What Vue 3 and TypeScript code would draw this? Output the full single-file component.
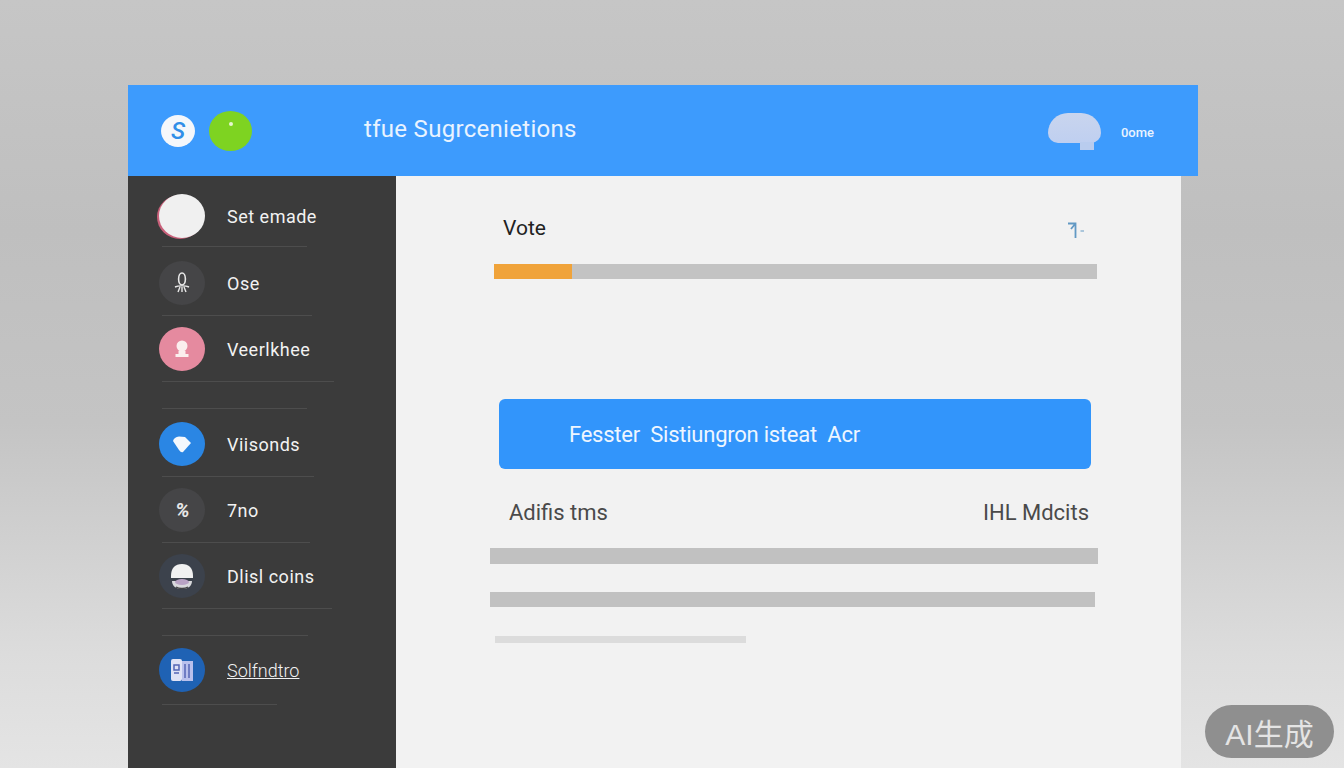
<template>
  <div class="page">
    <div class="window">
      <header class="topbar">
        <div class="brand">
          <div class="logo"><span>S</span></div>
          <div class="status-dot"><i></i></div>
        </div>
        <div class="title">tfue Sugrcenietions</div>
        <div class="account">
          <div class="cloud"><i></i></div>
          <span>0ome</span>
        </div>
      </header>

      <div class="content">
        <!-- Sidebar -->
        <aside class="sidebar">
          <div
            v-for="item in navItems"
            :key="item.label"
            class="nav-item"
            :class="{ spaced: item.topRule }"
          >
            <div v-if="item.topRule" class="nav-rule" :style="{ width: item.topRule + 'px' }"></div>
            <div class="nav-row" :style="{ height: item.height + 'px', paddingTop: item.pad + 'px' }">
              <div class="nav-icon" :class="item.tone">
                <svg v-if="item.tone === 'mic'" viewBox="0 0 20 24" width="20" height="24">
                  <ellipse cx="10" cy="8" rx="3.4" ry="6" fill="none" stroke="#e8e8e8" stroke-width="1.6" />
                  <path d="M3 16c3-1.500 11-1.500 14 0M6 21l2-5M10 21v-5M14 21l-2-5" fill="none" stroke="#e8e8e8" stroke-width="1.4" />
                </svg>
                <svg v-else-if="item.tone === 'rose'" viewBox="0 0 24 24" width="24" height="24">
                  <circle cx="12" cy="9" r="5.500" fill="#fbeeee" />
                  <path d="M8.500 14h7v3h3v3h-13v-3h3z" fill="#fbeeee" />
                </svg>
                <svg v-else-if="item.tone === 'gem'" viewBox="0 0 24 24" width="24" height="24">
                  <path d="M3 9Q4 5 9 4.500L15 5L21 11L13 20Q11 21 9 18z" fill="#f4f8fd" />
                </svg>
                <span v-else-if="item.tone === 'pct'" class="glyph">%</span>
                <svg v-else-if="item.tone === 'helmet'" viewBox="0 0 26 28" width="26" height="28">
                  <path d="M3 19h20c0 5-4 8-10 8S3 24 3 19z" fill="#d9d9dc" />
                  <path d="M2 14C2 6 6 2 13 2s11 4 11 12v2H2z" fill="#f1f1f1" />
                  <ellipse cx="13" cy="20" rx="7" ry="3" fill="#b9a3c4" />
                  <path d="M7 25c3 2 9 2 12 0" fill="none" stroke="#444" stroke-width="1.500" />
                </svg>
                <svg v-else-if="item.tone === 'book'" viewBox="0 0 26 28" width="26" height="28">
                  <rect x="2" y="3" width="11" height="22" rx="2" fill="#dfe2f6" />
                  <rect x="13" y="5" width="11" height="20" fill="#b9c0ec" />
                  <path d="M5 9h5v5H5zM5 17h5M16 8v14M20 8v14" fill="none" stroke="#5566b5" stroke-width="1.500" />
                </svg>
              </div>
              <span class="nav-label" :class="{ thin: item.tone === 'book' }">{{ item.label }}</span>
            </div>
            <div class="nav-rule" :style="{ width: item.rule + 'px' }"></div>
          </div>
        </aside>

        <!-- Main panel -->
        <main class="panel">
          <div class="vote-row">
            <span>Vote</span>
            <svg viewBox="0 0 18 18" width="18" height="18">
              <path d="M1 2.500h7.500V17M8.500 2.500 4 8" fill="none" stroke="#6299c4" stroke-width="1.800" />
              <path d="M13.500 10h3.500" stroke="#8db4d2" stroke-width="1.400" />
            </svg>
          </div>
          <div class="progress"><div class="progress-fill" :style="{ width: progress + 'px' }"></div></div>

          <div class="banner">Fesster&nbsp; Sistiungron isteat&nbsp; Acr</div>

          <div class="labels">
            <span>Adifis tms</span>
            <span>IHL Mdcits</span>
          </div>

          <div class="bar bar-one"></div>
          <div class="bar bar-two"></div>
          <div class="bar bar-three"></div>
        </main>
      </div>
    </div>

    <div class="badge">AI生成</div>
  </div>
</template>

<script setup lang="ts">
interface NavItem {
  label: string
  tone: string
  height: number
  pad: number
  rule: number
  topRule?: number
}

const progress = 78

const navItems: NavItem[] = [
  { label: 'Set emade', tone: 'blank', height: 70, pad: 10, rule: 145 },
  { label: 'Ose', tone: 'mic', height: 68, pad: 4, rule: 150 },
  { label: 'Veerlkhee', tone: 'rose', height: 65, pad: 0, rule: 172 },
  { label: 'Viisonds', tone: 'gem', height: 67, pad: 3, rule: 152, topRule: 145 },
  { label: '7no', tone: 'pct', height: 65, pad: 0, rule: 148 },
  { label: 'Dlisl coins', tone: 'helmet', height: 65, pad: 0, rule: 170 },
  { label: 'Solfndtro', tone: 'book', height: 68, pad: 0, rule: 115, topRule: 146 }
]
</script>

<style>
html,
body {
  margin: 0;
  height: 100%;
  overflow: hidden;
}
</style>

<style scoped>
.page {
  position: relative;
  width: 1344px;
  height: 768px;
  overflow: hidden;
  box-sizing: border-box;
  padding: 85px 0 0 128px;
  font-family: Roboto, "Noto Sans", sans-serif;
  background: linear-gradient(180deg, #c6c6c6 0%, #bfbfbf 30%, #c4c4c4 55%, #dcdcdc 85%, #e4e4e4 100%);
}

.window {
  width: 1070px;
}

.topbar {
  height: 91px;
  background: #3d9bfd;
  display: flex;
  align-items: center;
  color: #e9f3ff;
}

.brand {
  width: 236px;
  padding-left: 33px;
  box-sizing: border-box;
  display: flex;
  align-items: center;
  gap: 14px;
}

.logo {
  width: 34px;
  height: 32px;
  border-radius: 50%;
  background: #f4f7fb;
  color: #2f8ee8;
  display: flex;
  align-items: center;
  justify-content: center;
  font-size: 24px;
  font-style: italic;
  font-weight: 500;
}

.status-dot {
  width: 43px;
  height: 40px;
  border-radius: 50%;
  background: #7ed321;
  position: relative;
}

.status-dot i {
  position: absolute;
  left: 20px;
  top: 11px;
  width: 4px;
  height: 4px;
  border-radius: 50%;
  background: #e8f7d0;
}

.title {
  flex: 1;
  font-size: 24px;
  letter-spacing: 0.3px;
  margin-top: -4px;
}

.account {
  display: flex;
  align-items: center;
  gap: 20px;
  padding-right: 44px;
  font-size: 13px;
  font-weight: 500;
}

.account span {
  margin-top: 3px;
}

.cloud {
  width: 53px;
  height: 30px;
  border-radius: 20px 20px 10px 10px;
  background: linear-gradient(180deg, #c9d5ee, #bfcff0);
  position: relative;
  margin-top: -6px;
}

.cloud i {
  position: absolute;
  left: 32px;
  top: 29px;
  width: 14px;
  height: 8px;
  background: #b9ccee;
}

.content {
  display: flex;
  height: 592px;
}

.sidebar {
  width: 268px;
  flex-shrink: 0;
  background: #3b3b3b;
  padding-left: 31px;
  box-sizing: border-box;
}

.nav-item.spaced {
  margin-top: 26px;
}

.nav-row {
  box-sizing: border-box;
  display: flex;
  align-items: center;
  gap: 22px;
}

.nav-rule {
  height: 1px;
  background: #4d4d4d;
  margin-left: 3px;
}

.nav-icon {
  width: 46px;
  height: 44px;
  border-radius: 50%;
  flex-shrink: 0;
  display: flex;
  align-items: center;
  justify-content: center;
  background: #454547;
}

.nav-icon.blank {
  background: #f0f0f0;
  box-shadow: -2px 1px 0 #c9607a;
}

.nav-icon.rose {
  background: #e58a9f;
}

.nav-icon.gem {
  background: #2a86e4;
}

.nav-icon.helmet {
  background: #3c424c;
}

.nav-icon.book {
  background: #1f62b4;
}

.glyph {
  color: #e6e6e6;
  font-size: 20px;
  font-weight: 700;
  font-style: italic;
  letter-spacing: -1px;
}

.nav-label {
  color: #f2f2f2;
  font-size: 18px;
  letter-spacing: 0.5px;
  margin-top: 1px;
}

.nav-label.thin {
  font-weight: 300;
  letter-spacing: 0;
  text-decoration: underline;
  text-decoration-thickness: 1px;
}

.panel {
  width: 785px;
  flex-shrink: 0;
  background: #f2f2f2;
  box-sizing: border-box;
  padding: 38px 80px 0 98px;
  color: #3f3f3f;
}

.vote-row {
  display: flex;
  justify-content: space-between;
  align-items: center;
  height: 28px;
  padding: 0 11px 0 9px;
  font-size: 21px;
  color: #222;
}

.vote-row svg {
  margin-right: 5px;
  margin-top: 3px;
}

.progress {
  width: 603px;
  height: 15px;
  margin-top: 22px;
  background: #c3c3c3;
}

.progress-fill {
  height: 100%;
  background: #f0a33a;
}

.banner {
  width: 592px;
  height: 70px;
  margin: 120px 0 0 5px;
  padding-left: 70px;
  box-sizing: border-box;
  display: flex;
  align-items: center;
  border-radius: 6px;
  background: #3295fb;
  color: #eef6ff;
  font-size: 22px;
  letter-spacing: -0.25px;
}

.labels {
  display: flex;
  justify-content: space-between;
  width: 580px;
  margin: 30px 0 0 15px;
  font-size: 22px;
  line-height: 28px;
  color: #4a4a4a;
}

.bar {
  background: #c1c1c1;
}

.bar-one {
  width: 608px;
  height: 16px;
  margin: 21px 0 0 -4px;
}

.bar-two {
  width: 605px;
  height: 15px;
  margin: 28px 0 0 -4px;
}

.bar-three {
  width: 251px;
  height: 7px;
  margin: 29px 0 0 1px;
  background: #dcdcdc;
}

.badge {
  position: absolute;
  left: 1205px;
  top: 705px;
  width: 129px;
  height: 53px;
  border-radius: 27px;
  background: #8f8f8f;
  color: #e4e4e4;
  display: flex;
  align-items: center;
  justify-content: center;
  font-family: "Liberation Sans", "Noto Sans CJK SC", sans-serif;
  font-size: 30px;
}
</style>
